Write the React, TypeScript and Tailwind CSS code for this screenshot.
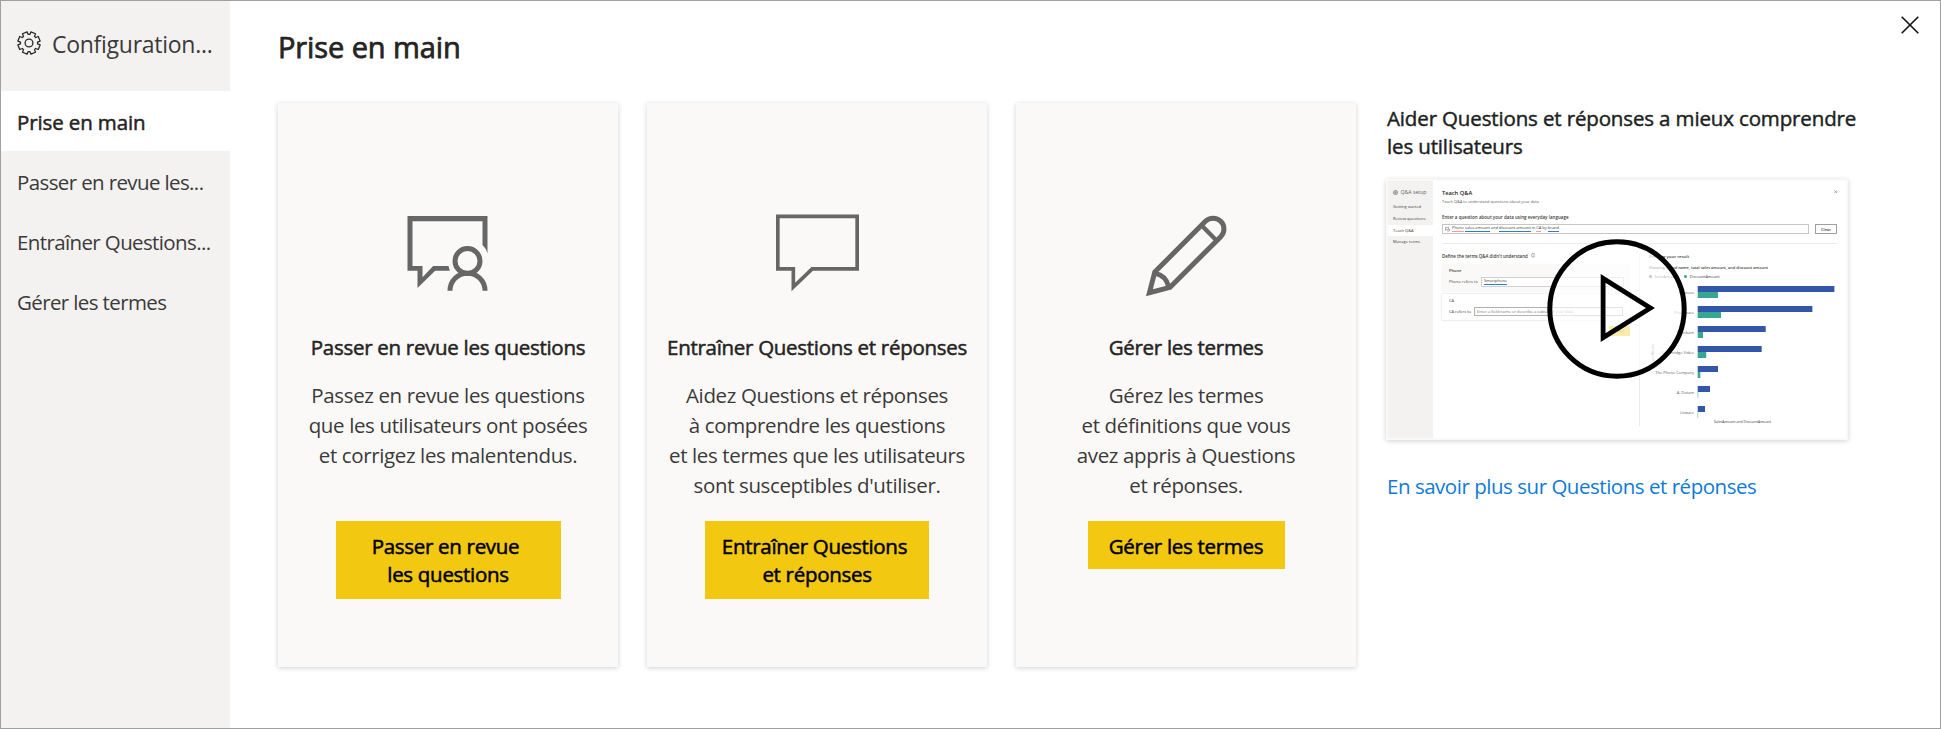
import type { ReactNode } from "react";

function GearIcon() {
  const pts: string[] = [];
  const n = 8;
  for (let i = 0; i < n; i++) {
    const base = (i * 2 * Math.PI) / n + Math.PI / n - Math.PI / 2;
    const at = (r: number, a: number) =>
      `${(12 + r * Math.cos(base + a)).toFixed(2)} ${(12 + r * Math.sin(base + a)).toFixed(2)}`;
    pts.push(at(8.6, -0.3), at(11.3, -0.22), at(11.3, 0.22), at(8.6, 0.3));
  }
  return (
    <svg viewBox="0 0 24 24" className="size-6 shrink-0" fill="none" stroke="#2b2a29" strokeWidth="1.3" strokeLinejoin="round">
      <path d={`M${pts.join("L")}Z`} />
      <circle cx="12" cy="12" r="3.9" />
    </svg>
  );
}

function ReviewIcon() {
  return (
    <svg viewBox="397.5 51 270 270" className="size-[90px]">
      <path
        fill="#666"
        d="M411 78H651V190Q646 174 636 165V94H426V228H456V262L488 228H534L538 242H494L441 294V242H411Z"
      />
      <g fill="none" stroke="#666" strokeWidth="15">
        <circle cx="591" cy="213" r="37.5" />
        <path d="M538.5 302A52.5 52.5 0 0 1 643.5 302" />
      </g>
    </svg>
  );
}

function BubbleIcon() {
  return (
    <svg viewBox="394.5 51 270 270" className="size-[90px]" fill="none" stroke="#666" strokeWidth="11">
      <path d="M412 79H650V236.5H515L458.5 291V236.5H412Z" />
    </svg>
  );
}

function PencilIcon() {
  return (
    <svg viewBox="422.7 51 270 270" className="size-[90px]" fill="none" stroke="#666" strokeWidth="15">
      <path d="M616 94A32.5 32.5 0 0 1 662 140L510 292L448 308L464 246Z" />
      <path d="M604 106L650 152" strokeWidth="13" />
      <path d="M466 250Q498 257 505 289" />
    </svg>
  );
}

function NavItem({ children, active }: { children: ReactNode; active?: boolean }) {
  return (
    <li
      className={
        active
          ? "flex h-[60px] items-center bg-white pt-[2px] pl-4 text-[20.5px] tracking-[-0.12px] text-[#252423] [-webkit-text-stroke:0.5px_#252423]"
          : "flex h-[60px] items-center pt-[2px] pl-4 text-[20.5px] tracking-[-0.62px] text-[#3b3a39]"
      }
    >
      {children}
    </li>
  );
}

interface CardProps {
  icon: ReactNode;
  title: string;
  lines: string[];
  button: string[];
  buttonClass: string;
}

function Card({ icon, title, lines, button, buttonClass }: CardProps) {
  return (
    <section className="flex h-[564px] w-[340px] flex-col items-center bg-[#faf9f8] pt-[104px] whitespace-nowrap shadow-[0_1px_5px_rgba(0,0,0,0.18)]">
      {icon}
      <h2 className="mt-[35px] text-[20.5px] leading-[30px] tracking-[-0.29px] text-[#252423] [-webkit-text-stroke:0.5px_#252423]">
        {title}
      </h2>
      <p className="mt-[18px] h-[120px] text-center text-[20.5px] leading-[30px] tracking-[-0.37px] text-[#3b3a39]">
        {lines.map((l) => (
          <span key={l} className="block">
            {l}
          </span>
        ))}
      </p>
      <button
        className={`mt-[21px] bg-[#f2c811] text-center text-[20.5px] leading-7 tracking-[-0.3px] text-black [-webkit-text-stroke:0.5px_#000] ${buttonClass}`}
      >
        {button.map((l, i) => (
          <span key={l} className={i < button.length - 1 ? "block pr-[5px]" : "block"}>
            {l}
          </span>
        ))}
      </button>
    </section>
  );
}

const bars: [string, number, number][] = [
  ["Contoso", 136.7, 20.3],
  ["Proseware", 114.7, 23.3],
  ["Fabrikam", 68, 5.3],
  ["Southridge Video", 64, 8.5],
  ["The Phone Company", 20.3, 2.6],
  ["A. Datum", 12.3, 0.5],
  ["Litware", 7.3, 0.4],
];

function Chart() {
  return (
    <svg viewBox="0 0 198 145" className="mt-[2.5px] block h-[145px] w-[198px]" fontSize="4" fill="#605e5c">
      {bars.map(([name, a, b], i) => (
        <g key={name}>
          <text x="54" y={11.6 + i * 20} textAnchor="end">
            {name}
          </text>
          <rect x="57.7" y={4 + i * 20} width={a} height="6" fill="#3257a8" />
          <rect x="57.7" y={10 + i * 20} width={b} height="6" fill="#37a794" />
        </g>
      ))}
      <text transform="translate(13.5 83) rotate(-90)" fontSize="3.8">
        BrandName
      </text>
      <text x="102.5" y="141" textAnchor="middle" fontSize="3.5" fill="#3b3a39">
        SalesAmount and DiscountAmount
      </text>
    </svg>
  );
}

function Preview() {
  return (
    <div className="relative mt-[19px] -ml-px h-[261px] w-[462px] bg-[#faf9f8] p-[2px] shadow-[0_1px_5px_rgba(0,0,0,0.18)]">
      <div className="flex h-[257px] w-[458px] overflow-hidden bg-white text-[4px] leading-[5px] whitespace-nowrap text-[#3b3a39]">
        <div className="w-[45px] shrink-0 bg-[#f3f2f1]">
          <div className="flex items-center gap-[2.5px] pt-[7px] pl-[5px] text-[5.2px] leading-[8px] text-[#605e5c]">
            <svg viewBox="0 0 10 10" className="size-[5px]" fill="none" stroke="#605e5c" strokeWidth="1.4">
              <circle cx="5" cy="5" r="4" />
              <circle cx="5" cy="5" r="1.4" />
            </svg>
            Q&amp;A setup
          </div>
          <div className="mt-[5px] flex h-[11.8px] items-center pl-[5px]">Getting started</div>
          <div className="flex h-[11.8px] items-center pl-[5px]">Review questions</div>
          <div className="flex h-[11.3px] items-center bg-white pl-[5px]">Teach Q&amp;A</div>
          <div className="flex h-[11.8px] items-center pl-[5px]">Manage terms</div>
        </div>
        <div className="flex w-[413px] shrink-0 flex-col pl-[9px]">
          <div className="mt-[7.5px] flex justify-between pr-[9px] text-[5.7px] leading-[8px] font-semibold text-[#252423]">
            Teach Q&amp;A
            <svg viewBox="0 0 4 4" className="mt-px size-[3.5px]" stroke="#605e5c" strokeWidth="0.6">
              <path d="M0.3 0.3L3.7 3.7M3.7 0.3L0.3 3.7" />
            </svg>
          </div>
          <div className="mt-[2.5px] text-[3.95px] text-[#605e5c]">Teach Q&amp;A to understand questions about your data</div>
          <div className="mt-[10px] text-[4.5px] leading-[6px] font-semibold text-[#3b3a39]">
            Enter a question about your data using everyday language
          </div>
          <div className="mt-[4px] flex gap-[6.5px]">
            <div className="flex h-[10px] w-[366.5px] items-center gap-px border border-[#c8c6c4] pl-[2px] text-[4px]">
              <svg viewBox="0 0 10 10" className="mr-px size-[5px]" fill="none" stroke="#605e5c">
                <path d="M1 1H7V5H3L1 7ZM4 8H9V4" />
              </svg>
              <span className="border-b border-[#e8a0a0] leading-[4.5px]">Phone</span>
              <span className="border-b border-[#2b7cd3] leading-[4.5px]">sales amount</span>
              <span className="border-b border-transparent leading-[4.5px]">and</span>
              <span className="border-b border-[#2b7cd3] leading-[4.5px]">discount amount</span>
              <span className="border-b border-transparent leading-[4.5px]">in</span>
              <span className="border-b border-[#e8a0a0] leading-[4.5px]">CA</span>
              <span className="border-b border-transparent leading-[4.5px]">by</span>
              <span className="border-b border-[#2b7cd3] leading-[4.5px]">brand</span>
            </div>
            <div className="flex h-[10px] w-[22px] items-center justify-center border border-[#a19f9d] text-[4px] font-semibold">
              Clear
            </div>
          </div>
          <div className="mt-[9px] mr-[9px] h-px bg-[#edebe9]" />
          <div className="flex pt-[8.5px]">
            <div className="w-[197px]">
              <div className="flex items-center gap-[3px] text-[4.4px] leading-[6px] font-semibold text-[#3b3a39]">
                Define the terms Q&amp;A didn't understand
                <svg viewBox="0 0 10 10" className="size-[4.5px]" fill="none" stroke="#605e5c">
                  <circle cx="5" cy="5" r="4.2" />
                  <path d="M5 4.5V7.5M5 2.6V3.4" />
                </svg>
              </div>
              <div className="mt-[6px] h-[26px] w-[188px] bg-[#faf9f8] pt-[3.5px] pl-[7px] shadow-[0_0_2px_rgba(0,0,0,0.08)]">
                <div className="font-semibold">Phone</div>
                <div className="mt-[4px] flex items-center gap-[3px]">
                  Phone refers to
                  <span className="flex h-[9.5px] w-[143px] items-center border border-[#d2d0ce] bg-white pl-[2px]">
                    <span className="border-b border-[#2b7cd3] leading-[4.5px]">Smartphone</span>
                  </span>
                </div>
              </div>
              <div className="mt-[3px] h-[26px] w-[188px] bg-white pt-[4px] pl-[7px] shadow-[0_0_2px_rgba(0,0,0,0.2)]">
                <div>CA</div>
                <div className="mt-[4px] flex items-center gap-[3px]">
                  CA refers to
                  <span className="flex h-[9.5px] w-[149px] items-center border border-[#b3b0ad] bg-white pl-[2px] text-[#797775]">
                    Enter a field name or describe a subset of your data
                  </span>
                </div>
              </div>
              <div className="mt-[6px] ml-[167px] flex h-[10px] w-[21px] items-center justify-center bg-[#f2c811]">Save</div>
            </div>
            <div className="h-[173px] w-px bg-[#edebe9]" />
            <div className="w-[198px]">
              <div className="pl-[9px] text-[4.3px] leading-[6px] font-semibold text-[#3b3a39]">Preview your result</div>
              <div className="mt-[6.5px] pl-[9px] text-[3.9px] font-semibold">
                Showing brand name, total sales amount, and discount amount
              </div>
              <div className="mt-[4px] flex items-center gap-[2.5px] pl-[9px] text-[3.8px]">
                <span className="size-[3px] rounded-full bg-[#3257a8]" />
                SalesAmount
                <span className="ml-[4px] size-[3px] rounded-full bg-[#37a794]" />
                DiscountAmount
              </div>
              <Chart />
            </div>
          </div>
        </div>
      </div>
      <svg viewBox="0 0 144 144" className="absolute top-[58.2px] left-[158.9px] size-[144px]" stroke="#000">
        <circle cx="72" cy="72" r="67.2" fill="#fff" fillOpacity="0.65" strokeWidth="5" />
        <path d="M58.1 41.4V100.6L105.4 71Z" fill="none" strokeWidth="4.8" />
      </svg>
    </div>
  );
}

export default function App() {
  return (
    <div className="flex h-[729px] w-[1941px] overflow-hidden border border-[#a0a0a0] bg-white font-['Open_Sans','Noto_Sans',sans-serif]">
      <aside className="w-[229px] shrink-0 bg-[#f3f2f1] whitespace-nowrap">
        <div className="flex h-[90px] items-center gap-[11px] pb-[7px] pl-4">
          <GearIcon />
          <span className="pt-[3px] text-[23px] tracking-[-0.27px] text-[#3b3a39]">Configuration...</span>
        </div>
        <ul>
          <NavItem active>Prise en main</NavItem>
          <NavItem>Passer en revue les...</NavItem>
          <NavItem>Entraîner Questions...</NavItem>
          <NavItem>Gérer les termes</NavItem>
        </ul>
      </aside>
      <main className="flex grow flex-col pl-12">
        <header className="flex h-[102px] justify-between pr-[21px]">
          <h1 className="pt-[26px] text-[29px] leading-[40px] tracking-[-0.1px] text-[#252423] [-webkit-text-stroke:0.75px_#252423]">
            Prise en main
          </h1>
          <svg viewBox="0 0 18 18" className="mt-[15px] size-[18px]" stroke="#111" strokeWidth="1.6">
            <path d="M0.7 0.7L17.3 17.3M17.3 0.7L0.7 17.3" />
          </svg>
        </header>
        <div className="flex">
          <div className="flex gap-[29px]">
            <Card
              icon={<ReviewIcon />}
              title="Passer en revue les questions"
              lines={["Passez en revue les questions", "que les utilisateurs ont posées", "et corrigez les malentendus."]}
              button={["Passer en revue", "les questions"]}
              buttonClass="h-[78px] w-[225px]"
            />
            <Card
              icon={<BubbleIcon />}
              title="Entraîner Questions et réponses"
              lines={[
                "Aidez Questions et réponses",
                "à comprendre les questions",
                "et les termes que les utilisateurs",
                "sont susceptibles d'utiliser.",
              ]}
              button={["Entraîner Questions", "et réponses"]}
              buttonClass="h-[78px] w-[224px]"
            />
            <Card
              icon={<PencilIcon />}
              title="Gérer les termes"
              lines={["Gérez les termes", "et définitions que vous", "avez appris à Questions", "et réponses."]}
              button={["Gérer les termes"]}
              buttonClass="h-12 w-[197px] pt-[2px]"
            />
          </div>
          <div className="ml-[31px] flex flex-col items-start pt-px whitespace-nowrap">
            <h2 className="text-[20.5px] leading-7 tracking-[-0.14px] text-[#201f1e] [-webkit-text-stroke:0.45px_#201f1e]">
              Aider Questions et réponses a mieux comprendre
              <br />
              les utilisateurs
            </h2>
            <Preview />
            <a className="mt-8 text-[20.5px] leading-7 tracking-[-0.47px] text-[#0f7ad8]">
              En savoir plus sur Questions et réponses
            </a>
          </div>
        </div>
      </main>
    </div>
  );
}
